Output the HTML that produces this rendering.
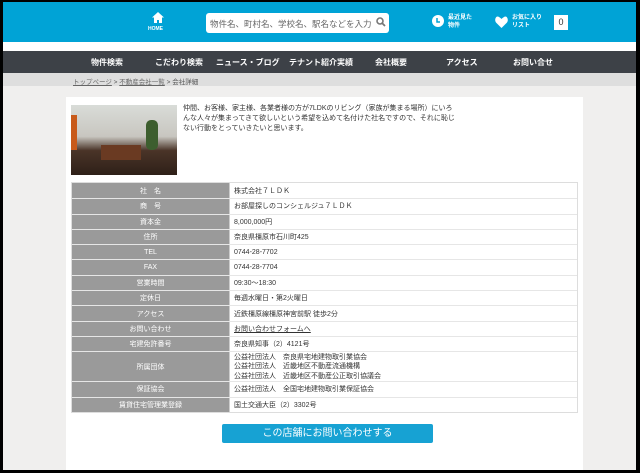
<!DOCTYPE html>
<html><head><meta charset="utf-8"><style>
*{margin:0;padding:0;box-sizing:border-box}
body{width:640px;height:473px;background:#000;font-family:"Liberation Sans","Noto Sans CJK JP",sans-serif;overflow:hidden;position:relative}
#pg{position:absolute;left:3px;top:2px;width:633px;height:468px;background:#f0efee;overflow:hidden}
#hd{position:absolute;left:0;top:0;width:633px;height:40px;background:#00a3d6}
#strip{position:absolute;left:0;top:40px;width:633px;height:9px;background:#fff}
#nav{position:absolute;left:0;top:49px;width:633px;height:22px;background:#3d4147;color:#fff;font-size:8px;font-weight:bold}
#nav span{position:absolute;top:6px}
#bc{position:absolute;left:0;top:71px;width:633px;height:13px;background:#dedede;font-size:6.5px;color:#555;padding:3px 0 0 70px}
#bc u{color:#666}
#main{position:absolute;left:63px;top:95px;width:517px;height:380px;background:#fff}
.w{color:#fff;font-size:6px;font-weight:bold;position:absolute}
#tbl{position:absolute;left:5px;top:85px;width:507px;border:1px solid #ddd;font-size:7px}
.r{display:flex;border-top:1px solid #e6e6e6;height:15.3px}
.r:first-child{border-top:none}
.l{width:158px;background:#9a9a9a;color:#fff;display:flex;align-items:center;justify-content:center;border-right:1px solid #ccc}
.v{flex:1;color:#333;padding-left:4px;display:flex;align-items:center}
</style></head><body><div id="pg">
<div id="hd">
 <svg style="position:absolute;left:149px;top:10px" width="12" height="11" viewBox="0 0 12 11"><path d="M6 0L0 5.5h2V11h3V8h2v3h3V5.5h2z" fill="#fff"/></svg>
 <div class="w" style="left:145px;top:24px;font-size:5px">HOME</div>
 <div style="position:absolute;left:203px;top:11px;width:183px;height:20px;background:#fff;border-radius:3px;font-size:8.5px;color:#666;padding:5px 0 0 4px">物件名、町村名、学校名、駅名などを入力</div>
 <svg style="position:absolute;left:373px;top:15px" width="10" height="10" viewBox="0 0 10 10"><circle cx="4" cy="4" r="3" stroke="#777" stroke-width="1.6" fill="none"/><path d="M6 6l3 3" stroke="#777" stroke-width="1.8"/></svg>
 <svg style="position:absolute;left:429px;top:13px" width="12" height="12"><circle cx="6" cy="6" r="6" fill="#fff"/><path d="M5 3v4h3" stroke="#00a3d6" stroke-width="1.5" fill="none"/></svg>
 <div class="w" style="left:445px;top:12px;line-height:8px">最近見た<br>物件</div>
 <svg style="position:absolute;left:492px;top:14px" width="13" height="12" viewBox="0 0 13 12"><path d="M6.5 12L1 6.5C-1 4 1-1 4 1c1 .5 2 1.5 2.5 2C7 2.5 8 1.5 9 1c3-2 5 3 3 5.5z" fill="#fff"/></svg>
 <div class="w" style="left:509px;top:12px;line-height:8px">お気に入り<br>リスト</div>
 <div style="position:absolute;left:551px;top:13px;width:14px;height:15px;background:#fff;font-size:9px;color:#333;text-align:center;padding-top:2px">0</div>
</div>
<div id="strip"></div>
<div id="nav"><span style="left:88px">物件検索</span><span style="left:152px">こだわり検索</span><span style="left:213px">ニュース・ブログ</span><span style="left:286px">テナント紹介実績</span><span style="left:372px">会社概要</span><span style="left:443px">アクセス</span><span style="left:510px">お問い合せ</span></div>
<div id="bc"><u>トップページ</u> &gt; <u>不動産会社一覧</u> &gt; 会社詳細</div>
<div id="main">
 <div style="position:absolute;left:5px;top:8px;width:106px;height:70px;background:linear-gradient(180deg,#d9dcd8 0%,#c8c6c0 45%,#4a3428 65%,#2e2018 100%)">
  <div style="position:absolute;left:0;top:10px;width:6px;height:35px;background:#c85a1a"></div>
  <div style="position:absolute;left:75px;top:15px;width:12px;height:30px;background:#3d5e2e;border-radius:5px"></div>
  <div style="position:absolute;left:30px;top:40px;width:40px;height:15px;background:#6a3a22"></div>
 </div>
 <div style="position:absolute;left:117px;top:7px;width:276px;font-size:7px;line-height:10px;color:#333">仲間、お客様、家主様、各業者様の方が7LDKのリビング（家族が集まる場所）にいろんな人々が集まってきて欲しいという希望を込めて名付けた社名ですので、それに恥じない行動をとっていきたいと思います。</div>
 <div id="tbl">
  <div class="r"><div class="l">社　名</div><div class="v">株式会社７ＬＤＫ</div></div>
  <div class="r"><div class="l">商　号</div><div class="v">お部屋探しのコンシェルジュ７ＬＤＫ</div></div>
  <div class="r"><div class="l">資本金</div><div class="v">8,000,000円</div></div>
  <div class="r"><div class="l">住所</div><div class="v">奈良県橿原市石川町425</div></div>
  <div class="r"><div class="l">TEL</div><div class="v">0744-28-7702</div></div>
  <div class="r"><div class="l">FAX</div><div class="v">0744-28-7704</div></div>
  <div class="r"><div class="l">営業時間</div><div class="v">09:30～18:30</div></div>
  <div class="r"><div class="l">定休日</div><div class="v">毎週水曜日・第2火曜日</div></div>
  <div class="r"><div class="l">アクセス</div><div class="v">近鉄橿原線橿原神宮前駅 徒歩2分</div></div>
  <div class="r"><div class="l">お問い合わせ</div><div class="v"><u>お問い合わせフォームへ</u></div></div>
  <div class="r"><div class="l">宅建免許番号</div><div class="v">奈良県知事（2）4121号</div></div>
  <div class="r" style="height:30px"><div class="l">所属団体</div><div class="v" style="line-height:9.5px">公益社団法人　奈良県宅地建物取引業協会<br>公益社団法人　近畿地区不動産流通機構<br>公益社団法人　近畿地区不動産公正取引協議会</div></div>
  <div class="r"><div class="l">保証協会</div><div class="v">公益社団法人　全国宅地建物取引業保証協会</div></div>
  <div class="r"><div class="l">賃貸住宅管理業登録</div><div class="v">国土交通大臣（2）3302号</div></div>
 </div>
 <div style="position:absolute;left:156px;top:327px;width:211px;height:19px;background:#17a2d3;border-radius:2px;color:#fff;font-size:10px;text-align:center;line-height:19px">この店舗にお問い合わせする</div>
</div>
</div></body></html>
